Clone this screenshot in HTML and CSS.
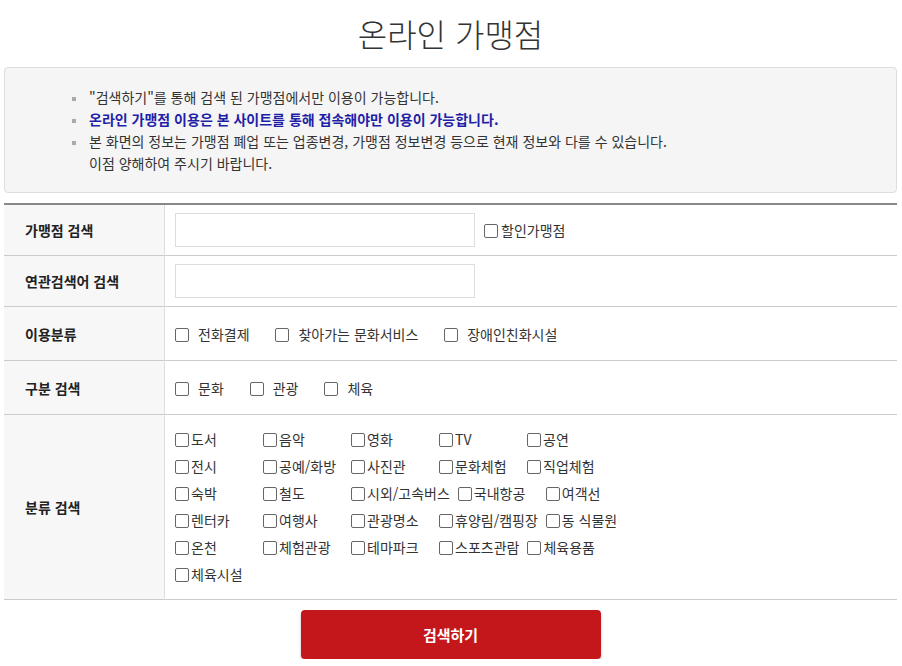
FILE: index.html
```html
<!DOCTYPE html>
<html lang="ko">
<head>
    <meta charset="UTF-8">
    <meta name="viewport" content="width=device-width, initial-scale=1.0">
    <title>온라인 가맹점</title>
    <link rel="stylesheet" href="styles.css">
</head>
<body>

<div class="wrap">
    <h2 class="title">온라인 가맹점</h2>

    <div class="notice">
        <ul>
            <li>"검색하기"를 통해 검색 된 가맹점에서만 이용이 가능합니다.</li>
            <li class="strong">온라인 가맹점 이용은 본 사이트를 통해 접속해야만 이용이 가능합니다.</li>
            <li>본 화면의 정보는 가맹점 폐업 또는 업종변경, 가맹점 정보변경 등으로 현재 정보와 다를 수 있습니다.<br>이점 양해하여 주시기 바랍니다.</li>
        </ul>
    </div>

    <table class="search">
        <tr class="row-input">
            <th>가맹점 검색</th>
            <td>
                <input type="text" class="field"><label class="chk-inline"><input type="checkbox" class="chk">할인가맹점</label>
            </td>
        </tr>
        <tr class="row-input">
            <th>연관검색어 검색</th>
            <td><input type="text" class="field"></td>
        </tr>
        <tr class="row-check">
            <th>이용분류</th>
            <td>
                <label class="opt"><input type="checkbox" class="chk">전화결제</label>
                <label class="opt"><input type="checkbox" class="chk">찾아가는 문화서비스</label>
                <label class="opt"><input type="checkbox" class="chk">장애인친화시설</label>
            </td>
        </tr>
        <tr class="row-check">
            <th>구분 검색</th>
            <td>
                <label class="opt"><input type="checkbox" class="chk">문화</label>
                <label class="opt"><input type="checkbox" class="chk">관광</label>
                <label class="opt"><input type="checkbox" class="chk">체육</label>
            </td>
        </tr>
        <tr class="row-cate">
            <th>분류 검색</th>
            <td>
                <label class="cate"><input type="checkbox" class="chk">도서</label><label class="cate"><input type="checkbox" class="chk">음악</label><label class="cate"><input type="checkbox" class="chk">영화</label><label class="cate"><input type="checkbox" class="chk">TV</label><label class="cate"><input type="checkbox" class="chk">공연</label><br>
                <label class="cate"><input type="checkbox" class="chk">전시</label><label class="cate"><input type="checkbox" class="chk">공예/화방</label><label class="cate"><input type="checkbox" class="chk">사진관</label><label class="cate"><input type="checkbox" class="chk">문화체험</label><label class="cate"><input type="checkbox" class="chk">직업체험</label><br>
                <label class="cate"><input type="checkbox" class="chk">숙박</label><label class="cate"><input type="checkbox" class="chk">철도</label><label class="cate"><input type="checkbox" class="chk">시외/고속버스</label><label class="cate"><input type="checkbox" class="chk">국내항공</label><label class="cate"><input type="checkbox" class="chk">여객선</label><br>
                <label class="cate"><input type="checkbox" class="chk">렌터카</label><label class="cate"><input type="checkbox" class="chk">여행사</label><label class="cate"><input type="checkbox" class="chk">관광명소</label><label class="cate"><input type="checkbox" class="chk">휴양림/캠핑장</label><label class="cate"><input type="checkbox" class="chk">동 식물원</label><br>
                <label class="cate"><input type="checkbox" class="chk">온천</label><label class="cate"><input type="checkbox" class="chk">체험관광</label><label class="cate"><input type="checkbox" class="chk">테마파크</label><label class="cate"><input type="checkbox" class="chk">스포츠관람</label><label class="cate"><input type="checkbox" class="chk">체육용품</label><br>
                <label class="cate"><input type="checkbox" class="chk">체육시설</label>
            </td>
        </tr>
    </table>

    <div class="btn-area">
        <button class="btn-search">검색하기</button>
    </div>
</div>

</body>
</html>
```

FILE: styles.css
```css
body {
    margin: 0;
    font-family: "Noto Sans CJK KR", "Noto Sans", sans-serif;
    font-size: 14px;
    color: #333;
    background: #fff;
}
.wrap {
    margin: 0 5px 0 4px;
}
.title {
    margin: 0;
    height: 67px;
    line-height: 67px;
    text-align: center;
    font-size: 32px;
    font-weight: 300;
    color: #333;
}
.notice {
    background: #f5f5f5;
    border: 1px solid #ddd;
    border-radius: 4px;
    padding: 18px 0;
}
.notice ul {
    list-style: none;
    margin: 0;
    padding: 0 0 0 67px;
}
.notice li {
    line-height: 22px;
    padding-left: 17px;
    color: #333;
}
.notice li::before {
    content: "";
    display: inline-block;
    width: 4px;
    height: 4px;
    background: #aaa;
    margin: 0 13px 0 -17px;
    vertical-align: middle;
}
.notice li.strong {
    color: #1f1fa8;
    font-weight: bold;
}
.search {
    width: 100%;
    margin-top: 10px;
    border-collapse: collapse;
    border-top: 2px solid #888;
}
.search tr {
    border-bottom: 1px solid #ccc;
}
.search th {
    width: 139px;
    padding: 0 0 0 21px;
    background: #f7f7f7;
    border-right: 1px solid #ddd;
    text-align: left;
    font-size: 14px;
    font-weight: bold;
    color: #222;
}
.search td {
    padding: 0 10px;
}
.row-input td {
    height: 50px;
}
.row-check td {
    height: 53px;
}
.row-cate td {
    padding: 11px 10px 11px;
    line-height: 27px;
}
.field {
    width: 300px;
    height: 34px;
    box-sizing: border-box;
    border: 1px solid #ddd;
    vertical-align: middle;
    font-family: inherit;
}
.chk {
    appearance: none;
    -webkit-appearance: none;
    width: 14px;
    height: 14px;
    margin: 0;
    border: 1px solid #666;
    border-radius: 2px;
    background: #fff;
    vertical-align: middle;
    position: relative;
    top: -1px;
}
.chk-inline {
    margin-left: 9px;
    vertical-align: middle;
}
.chk-inline .chk {
    margin-right: 3px;
}
.opt {
    margin-right: 22px;
}
.opt .chk {
    margin-right: 9px;
}
.cate {
    display: inline-block;
    min-width: 80px;
    margin-right: 8px;
    white-space: nowrap;
}
.cate .chk {
    margin-right: 2px;
}
.btn-area {
    text-align: center;
    padding-top: 10px;
}
.btn-search {
    width: 300px;
    height: 49px;
    border: 0;
    border-radius: 4px;
    background: #c4171b;
    box-shadow: 0 2px 3px rgba(0, 0, 0, 0.25);
    color: #fff;
    font-family: inherit;
    font-size: 15px;
    font-weight: bold;
    cursor: pointer;
}
```
